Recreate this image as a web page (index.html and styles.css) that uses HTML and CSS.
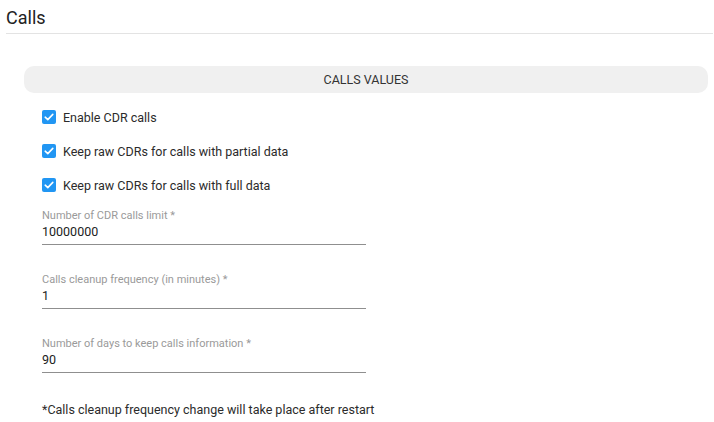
FILE: index.html
```html
<!DOCTYPE html>
<html lang="en">
<head>
<meta charset="utf-8">
<title>Calls</title>
<link rel="stylesheet" href="styles.css">
</head>
<body>
  <header class="page-header">
    <h1 class="page-title">Calls</h1>
  </header>
  <section class="section">
    <div class="section-bar">CALLS VALUES</div>
    <div class="section-body">
      <label class="check-row">
        <span class="check-box"><svg viewBox="0 0 14 14" width="14" height="14"><path d="M3.2 7.2 L5.8 9.6 L10.8 4.4" fill="none" stroke="#fff" stroke-width="1.6" stroke-linecap="round" stroke-linejoin="round"/></svg></span>
        <span class="check-label">Enable CDR calls</span>
      </label>
      <label class="check-row">
        <span class="check-box"><svg viewBox="0 0 14 14" width="14" height="14"><path d="M3.2 7.2 L5.8 9.6 L10.8 4.4" fill="none" stroke="#fff" stroke-width="1.6" stroke-linecap="round" stroke-linejoin="round"/></svg></span>
        <span class="check-label">Keep raw CDRs for calls with partial data</span>
      </label>
      <label class="check-row">
        <span class="check-box"><svg viewBox="0 0 14 14" width="14" height="14"><path d="M3.2 7.2 L5.8 9.6 L10.8 4.4" fill="none" stroke="#fff" stroke-width="1.6" stroke-linecap="round" stroke-linejoin="round"/></svg></span>
        <span class="check-label">Keep raw CDRs for calls with full data</span>
      </label>

      <div class="field">
        <div class="field-label">Number of CDR calls limit *</div>
        <div class="field-value">10000000</div>
      </div>
      <div class="field">
        <div class="field-label">Calls cleanup frequency (in minutes) *</div>
        <div class="field-value">1</div>
      </div>
      <div class="field">
        <div class="field-label">Number of days to keep calls information *</div>
        <div class="field-value">90</div>
      </div>

      <p class="note">*Calls cleanup frequency change will take place after restart</p>
    </div>
  </section>
</body>
</html>
```

FILE: styles.css
```css
html, body {
  margin: 0;
  padding: 0;
  background: #ffffff;
  font-family: Roboto, "Liberation Sans", Arial, sans-serif;
  color: #212121;
}

.page-header {
  margin: 0 1px 0 6px;
  padding: 6px 0 3px;
  border-bottom: 1px solid #e3e3e3;
}

.page-title {
  margin: 0;
  font-size: 18px;
  line-height: 24px;
  font-weight: 400;
  color: #222222;
}

.section {
  margin: 32px 6px 0 24px;
}

.section-bar {
  height: 27px;
  line-height: 27px;
  background: #f0f0f0;
  border-radius: 10px;
  text-align: center;
  font-size: 12.5px;
  color: #333333;
}

.section-body {
  padding: 7px 0 0 18px;
}

.check-row {
  display: flex;
  align-items: center;
  gap: 7px;
  height: 34px;
}

.check-box {
  width: 14px;
  height: 14px;
  border-radius: 2px;
  background: #2196f3;
  display: flex;
  flex: none;
}

.check-label {
  font-size: 12.5px;
  color: #2b2b2b;
}

.field {
  width: 324px;
  margin-top: 7px;
}

.field + .field {
  margin-top: 28px;
}

.field-label {
  font-size: 11px;
  line-height: 13px;
  color: #9a9a9a;
  margin-bottom: 1px;
}

.field-value {
  font-size: 12.5px;
  line-height: 17px;
  padding-bottom: 4px;
  border-bottom: 1px solid #8f8f8f;
  color: #222222;
}

.note {
  margin: 28px 0 0;
  font-size: 12.5px;
  line-height: 17px;
  color: #2b2b2b;
}
```
